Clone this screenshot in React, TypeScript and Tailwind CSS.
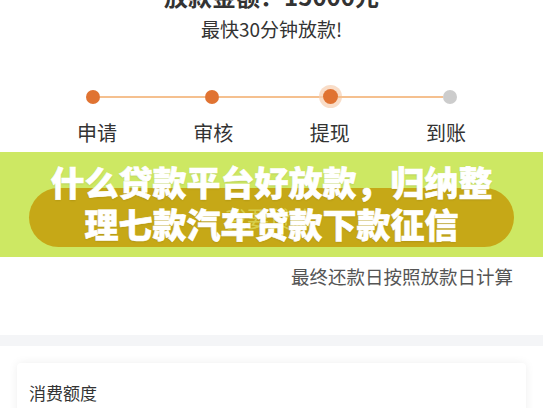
const steps = ["申请", "审核", "提现", "到账"];

const Dot = ({ kind }: { kind: "done" | "active" | "todo" }) => {
  if (kind === "active")
    return <span className="h-[15px] w-[15px] shrink-0 rounded-full bg-[#e07332] ring-4 ring-[#f7cfb0]/70" />;
  return (
    <span
      className={`h-[14px] w-[14px] shrink-0 rounded-full ${kind === "done" ? "bg-[#e07332]" : "bg-[#cccccc]"}`}
    />
  );
};

export default function App() {
  return (
    <div
      className="h-[408px] w-[543px] overflow-hidden bg-white text-[#333]"
      style={{ fontFamily: '"Noto Sans CJK SC", "Noto Sans", sans-serif' }}
    >
      <div className="-mt-[16px] text-center text-[24px] font-bold leading-[24px] text-[#333]">放款金额：15000元</div>
      <div className="mt-[9px] text-center text-[19px] leading-[24px] text-[#333]">最快30分钟放款!</div>

      {/* progress */}
      <div className="mt-[48px] flex items-center px-[86px]">
        <Dot kind="done" />
        <span className="h-[2px] flex-1 bg-[#f5c08f]" />
        <Dot kind="done" />
        <span className="h-[2px] flex-1 bg-[#f5c08f]" />
        <Dot kind="active" />
        <span className="h-[2px] flex-1 bg-[#f5c08f]" />
        <Dot kind="todo" />
      </div>
      <div className="mt-[17px] flex justify-between px-[77px] text-[20px] leading-[24px] text-[#333]">
        {steps.map((s) => (
          <span key={s}>{s}</span>
        ))}
      </div>

      {/* banner */}
      <div className="relative mt-[7px] h-[105px] bg-[#cde863] pt-[9px]">
        <div className="absolute left-[29px] right-[29px] top-[36px] h-[59px] rounded-full bg-[#c6a817]">
          <span className="absolute left-[196px] top-[17px] text-[22px] leading-[24px] text-[#dcd95a]/80">我要贷款</span>
        </div>
        <div className="relative text-center text-[34px] font-black leading-[42px] text-white [-webkit-text-stroke:0.6px_white] [text-shadow:0_1px_2px_rgba(0,0,0,0.12)]">
          什么贷款平台好放款，归纳整
          <br />
          理七款汽车贷款下款征信
        </div>
      </div>

      <div className="mt-[7px] pr-[30px] text-right text-[18.5px] leading-[24px] text-[#555]">最终还款日按照放款日计算</div>

      <div className="mt-[47px] h-[11px] bg-[#f4f5f7]" />

      <div className="px-[17px] pt-[17px]">
        <div className="h-[80px] rounded-[4px] bg-white px-[12px] pt-[18px] shadow-[0_0_10px_rgba(0,0,0,0.07)]">
          <div className="text-[17px] leading-[24px] text-[#333]">消费额度</div>
        </div>
      </div>
    </div>
  );
}
